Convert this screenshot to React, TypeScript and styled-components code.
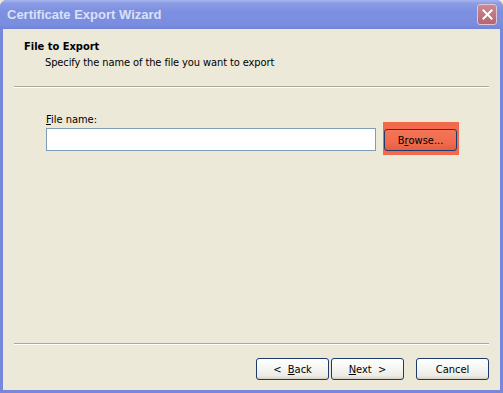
import styled, { createGlobalStyle } from 'styled-components'

const GlobalStyle = createGlobalStyle`
  html, body {
    margin: 0;
    padding: 0;
    background: #ece9d8;
  }
  body {
    font-family: Tahoma, "DejaVu Sans Condensed", "DejaVu Sans", sans-serif;
    font-size: 11px;
  }
`

const Window = styled.div`
  display: flex;
  flex-direction: column;
  width: 503px;
  height: 393px;
  box-sizing: border-box;
  background: #7687dc;
  border-radius: 7px 7px 0 0;
  overflow: hidden;
`

const TitleBar = styled.div`
  display: flex;
  align-items: center;
  justify-content: space-between;
  height: 29px;
  flex-shrink: 0;
  padding: 0 6px 0 7px;
  background: linear-gradient(180deg, #a6b5ef 0%, #8a9be5 12%, #7d8fe0 40%, #7b8ddf 85%, #7284d9 100%);
`

const Title = styled.span`
  font-family: "Liberation Sans", Arial, sans-serif;
  font-size: 13px;
  font-weight: bold;
  color: #d8e1f7;
`

const CloseButton = styled.div`
  display: flex;
  align-items: center;
  justify-content: center;
  width: 20px;
  height: 21px;
  box-sizing: border-box;
  border: 1px solid #e2c5d0;
  border-radius: 3px;
  background: linear-gradient(180deg, #c88a93 0%, #b86470 100%);
`

const Client = styled.div`
  display: flex;
  flex-direction: column;
  flex: 1;
  margin: 0 3px 3px 3px;
  background: #ece9d8;
`

const Header = styled.div`
  display: flex;
  flex-direction: column;
  gap: 3px;
  height: 57px;
  box-sizing: border-box;
  padding: 11px 0 0 21px;
`

const HeaderTitle = styled.div`
  font-weight: bold;
  color: #000;
`

const HeaderSub = styled.div`
  padding-left: 21px;
  color: #000;
  letter-spacing: -0.1px;
`

const Separator = styled.div`
  height: 1px;
  margin: 0 11px;
  background: #aca899;
  border-bottom: 1px solid #fff;
`

const Body = styled.div`
  flex: 1;
  padding: 25px 0 0 43px;
`

const FieldLabel = styled.div`
  color: #000;
  margin-bottom: 2px;
`

const FieldRow = styled.div`
  display: flex;
  align-items: flex-start;
  gap: 7px;
`

const TextInput = styled.div`
  width: 330px;
  height: 23px;
  box-sizing: border-box;
  border: 1px solid #7f9db9;
  background: #fff;
`

/* red marker drawn round the Browse button in the screenshot */
const Highlight = styled.div`
  display: flex;
  margin-top: -6px;
  padding: 7px 2px 4px 1px;
  background: #f26a4b;
`

const Button = styled.div<{ $hot?: boolean }>`
  display: flex;
  align-items: center;
  justify-content: center;
  width: 73px;
  height: 22px;
  box-sizing: border-box;
  border: 1px solid #1c3a6c;
  border-radius: 3px;
  color: #000;
  white-space: pre;
  background: ${(p) =>
    p.$hot
      ? 'linear-gradient(180deg, #f3765a 0%, #f26b4c 60%, #e35f42 100%)'
      : 'linear-gradient(180deg, #ffffff 0%, #f7f7f4 40%, #ecebe5 85%, #d6d0c5 100%)'};
  cursor: default;
`

const Footer = styled.div`
  display: flex;
  justify-content: flex-end;
  gap: 2px;
  padding: 13px 11px 10px 0;
`

const Spacer = styled.div`
  width: 8px;
`

const App = () => {
  return (
    <>
      <GlobalStyle />
      <Window>
        <TitleBar>
          <Title>Certificate Export Wizard</Title>
          <CloseButton>
            <svg width="11" height="11" viewBox="0 0 11 11">
              <path d="M1.5 1.5 L9.5 9.5 M9.5 1.5 L1.5 9.5" stroke="#fff" strokeWidth="2" strokeLinecap="square" />
            </svg>
          </CloseButton>
        </TitleBar>
        <Client>
          <Header>
            <HeaderTitle>File to Export</HeaderTitle>
            <HeaderSub>Specify the name of the file you want to export</HeaderSub>
          </Header>
          <Separator />
          <Body>
            <FieldLabel>
              <u>F</u>ile name:
            </FieldLabel>
            <FieldRow>
              <TextInput />
              <Highlight>
                <Button $hot>
                  B<u>r</u>owse...
                </Button>
              </Highlight>
            </FieldRow>
          </Body>
          <Separator />
          <Footer>
            <Button>
              {'<  '}
              <u>B</u>ack
            </Button>
            <Button>
              <u>N</u>ext{'  >'}
            </Button>
            <Spacer />
            <Button>Cancel</Button>
          </Footer>
        </Client>
      </Window>
    </>
  )
}

export default App
